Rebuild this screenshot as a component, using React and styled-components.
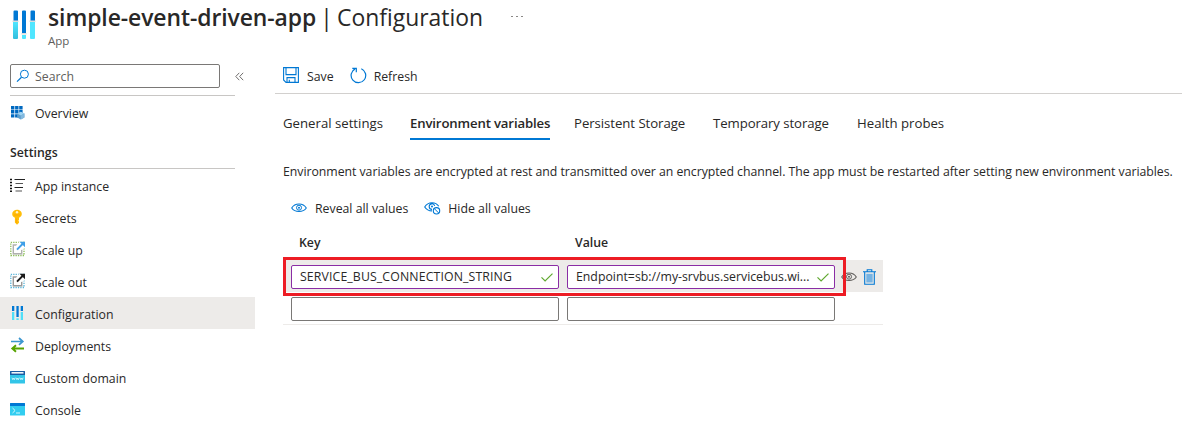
import React from 'react';
import styled, { createGlobalStyle } from 'styled-components';

const GlobalStyle = createGlobalStyle`
  * { box-sizing: border-box; }
  body {
    margin: 0;
    background: #fff;
    color: #292827;
    font-family: "Open Sans", "Noto Sans", sans-serif;
    font-size: 12.3px;
    line-height: 18px;
    overflow: hidden;
  }
`;

const Page = styled.div`
  width: 1182px;
  height: 426px;
  overflow: hidden;
`;

const Header = styled.header`
  display: flex;
  height: 64px;
  padding: 0 0 0 10px;
`;

const HeaderIcon = styled.div`
  width: 38px;
  padding-top: 9px;
`;

const Titles = styled.div`
  padding-top: 2px;
`;

const Title = styled.h1`
  display: flex;
  margin: 0;
  font-size: 22.9px;
  font-weight: 400;
  line-height: 32px;
  white-space: pre;
  word-spacing: -1.8px;
`;

const TitleName = styled.span`
  font-weight: 600;
  letter-spacing: -0.07px;
`;

const Subtitle = styled.div`
  margin-top: -1px;
  font-size: 11.5px;
  line-height: 16px;
  color: #605e5c;
`;

const More = styled.span`
  display: flex;
  gap: 3px;
  margin: 14px 0 0 28px;
  i {
    width: 2px;
    height: 1px;
    background: #8a8886;
  }
`;

const Body = styled.div`
  display: flex;
`;

const Sidebar = styled.nav`
  width: 255px;
  flex: none;
  margin-right: 20px;
`;

const SearchRow = styled.div`
  display: flex;
  align-items: center;
  padding-left: 10px;
`;

const SearchBox = styled.div`
  display: flex;
  align-items: center;
  width: 210px;
  height: 24px;
  padding: 1px 0 0 5px;
  gap: 5px;
  border: 1px solid #7a7876;
  border-radius: 2px;
  color: #605e5c;
  margin-right: 15px;
  svg { margin-top: -2px; }
`;

const Rule = styled.div`
  height: 1px;
  width: 225px;
  margin: ${(p) => p.$top}px 0 0 10px;
  background: #c8c6c4;
`;

const NavItem = styled.div`
  display: flex;
  align-items: center;
  height: 32px;
  padding: 0 0 0 10px;
  margin-top: ${(p) => p.$top || 0}px;
  background: ${(p) => (p.$active ? '#edebe9' : 'transparent')};
  svg { margin: ${(p) => p.$drop - 4}px 10px 0 0; }
  span { padding-top: ${(p) => p.$drop}px; }
`;

const SectionTitle = styled.div`
  margin: 15px 0 0 10px;
  height: 18px;
  font-weight: 600;
`;

const Main = styled.main`
  flex: 1;
  min-width: 0;
`;

const Toolbar = styled.div`
  display: flex;
  align-items: center;
  height: 30px;
  padding: 0 0 6px 8px;
  border-bottom: 1px solid #d2d0ce;
`;

const Command = styled.div`
  display: flex;
  align-items: center;
  gap: ${(p) => p.$gap}px;
  margin-right: ${(p) => p.$after || 0}px;
  svg { flex: none; margin-top: ${(p) => p.$lift || 0}px; }
  span { padding-top: ${(p) => p.$drop || 0}px; }
`;

const Tabs = styled.div`
  display: flex;
  padding: 18px 0 0 8px;
  height: 46px;
`;

const Tab = styled.div`
  width: ${(p) => p.$width}px;
  margin-right: ${(p) => p.$after}px;
  height: 28px;
  line-height: 22px;
  font-size: 13.2px;
  white-space: nowrap;
  font-weight: ${(p) => (p.$active ? 600 : 400)};
  border-bottom: 2px solid ${(p) => (p.$active ? '#0078d4' : 'transparent')};
  letter-spacing: ${(p) => p.$spacing || 0}px;
`;

const Description = styled.p`
  margin: 23px 0 0 8px;
  white-space: nowrap;
  letter-spacing: -0.04px;
`;

const ValueActions = styled.div`
  display: flex;
  height: 18px;
  margin-top: 19px;
  padding-left: 16px;
`;

const Table = styled.div`
  position: relative;
  width: 600px;
  margin: 15px 0 0 8px;
`;

const HeadRow = styled.div`
  display: grid;
  grid-template-columns: 276px 1fr;
  height: 27px;
  padding: 1px 0 0 16px;
  font-weight: 600;
`;

const Row = styled.div`
  display: flex;
  align-items: flex-start;
  gap: 8px;
  height: ${(p) => (p.$active ? 32 : 33)}px;
  padding: 5px 0 0 8px;
  background: ${(p) => (p.$active ? '#edebe9' : 'transparent')};
  border-bottom: 1px solid #edebe9;
`;

const Field = styled.div`
  display: flex;
  align-items: center;
  justify-content: space-between;
  width: 268px;
  height: 24px;
  padding: 0 5px 0 8px;
  background: #fff;
  border: 1px solid ${(p) => (p.$valid ? '#8a2da5' : '#7a7876')};
  border-radius: 2px;
  white-space: nowrap;
  letter-spacing: ${(p) => p.$spacing || 0}px;
`;

const RowActions = styled.div`
  display: flex;
  align-items: center;
  height: 24px;
  gap: 6px;
  margin-left: -2px;
`;

const Highlight = styled.div`
  position: absolute;
  left: 0;
  top: 24px;
  width: 563px;
  height: 39px;
  border: 3px solid #ed1c24;
`;

const Svg = ({ w = 16, h = 16, children }) => (
  <svg width={w} height={h} viewBox={`0 0 ${w} ${h}`} fill="none">{children}</svg>
);

const AppIcon = () => (
  <Svg w={28} h={32}>
    <defs>
      <linearGradient id="cyan" x1="0" y1="0" x2="0" y2="1">
        <stop offset="0" stopColor="#50e6ff" />
        <stop offset="1" stopColor="#32bedd" />
      </linearGradient>
    </defs>
    <path d="M3.500 2.500q0-1 1-1h2.500q1 0 1 1V12H3.500zM20.500 2.500q0-1 1-1h2.500q1 0 1 1V12h-4.500zM12 2.500q0-1 1-1h2q1 0 1 1V24h-4z" fill="#0078d4" />
    <path d="M3 13h5v16q0 1-1 1H4q-1 0-1-1z" fill="url(#cyan)" />
    <path d="M20 13h5v16q0 1-1 1h-3q-1 0-1-1zM12 26h4v3q0 1-1 1h-2q-1 0-1-1z" fill="#50e6ff" />
    <path d="M2.500 12.200h6M19.500 12.200h6M11.500 24.800h5" stroke="#dcdcdc" strokeWidth="1.600" />
  </Svg>
);

const SearchIcon = () => (
  <Svg w={14} h={14}>
    <circle cx="8.400" cy="5.200" r="4" stroke="#0078d4" />
    <path d="M5.500 8.200 1 12.600" stroke="#0078d4" strokeWidth="1.200" />
  </Svg>
);

const CollapseIcon = () => (
  <Svg w={9} h={9}>
    <path d="M4.300.8.8 4.500l3.500 3.700M8.200.8 4.700 4.500l3.500 3.700" stroke="#605e5c" strokeWidth=".9" />
  </Svg>
);

const OverviewIcon = () => (
  <Svg w={15} h={16}>
    <path d="M1 2h3.400v3.400H1zM5.100 2h3.400v3.400H5.100zM9.200 2h3.400v3.400H9.200zM1 6.100h3.400v3.400H1zM5.100 6.100h3.400v3.400H5.100zM9.200 6.100h3.400v3.400H9.200zM1 10.200h3.400v3.400H1zM5.100 10.200h3.400v3.400H5.100z" fill="#0069c0" />
    <path d="m10.800 7.800 3.600 1.800v4l-3.600 1.900-3.600-1.900v-4z" fill="#5ea0cf" />
    <path d="m10.800 7.800 3.600 1.800-3.600 1.900-3.600-1.900z" fill="#9fd4f3" />
    <path d="m10.800 11.500 3.600-1.900v4l-3.600 1.900z" fill="#83b9df" />
  </Svg>
);

const ListIcon = () => (
  <Svg w={15} h={16}>
    <path d="M0 2.500h2M0 5.500h2M0 8.500h2M0 11.500h2M0 14.300h2" stroke="#111" strokeWidth="1.500" />
    <path d="M4.500 2.500H15M4.500 10.500H13" stroke="#222" strokeWidth="1.200" />
    <path d="M5.500 6.500h7.500M5.500 14h6.500" stroke="#555" strokeWidth="1.200" />
  </Svg>
);

const KeyIcon = () => (
  <Svg w={15} h={16}>
    <path d="M7 .8C4.300.8 2.200 2.700 2.200 5c0 1.700 1 3 2.700 3.800v4.700L7 15.700l2-2v-1.100l-.7-.8.7-.8V8.800c1.700-.8 2.800-2.100 2.800-3.800C11.800 2.700 9.700.8 7 .8z" fill="#ffbe0a" />
    <circle cx="7" cy="3.200" r="1.200" fill="#fff3d0" />
    <path d="M4 6h6M6.300 9.500v4.500" stroke="#ffa800" strokeWidth="1" />
  </Svg>
);

const ScaleIcon = ({ dots, arrow, box }) => (
  <Svg w={15} h={16}>
    <rect x=".8" y="1.300" width="13.200" height="13.200" stroke={dots} strokeWidth="1.300" strokeDasharray="1.300 1.100" />
    <path d="M7.500 4H3.300v8.700h8.400V8.500" stroke={box} strokeWidth="1.400" />
    <path d="M5.500 9V5.500L9 1h6v6l-4 2z" fill="#fff" />
    <path d="M7 8.700 13 2.500" stroke={arrow} strokeWidth="1.900" />
    <path d="M9.500.8H15v5.500z" fill={arrow} />
  </Svg>
);

const ConfigIcon = () => (
  <Svg w={15} h={16}>
    <path d="M2 1h2.300v5H2zM6.400 1h2.300v11H6.400zM10.700 1H13v5h-2.300z" fill="#0078d4" />
    <path d="M2 7h2.300v8H2zM6.400 13.200h2.300V15H6.400zM10.700 7H13v8h-2.300z" fill="#50dff8" />
  </Svg>
);

const DeployIcon = () => (
  <Svg w={15} h={16}>
    <path d="M1 4.500h11.500M9 1 12.800 4.500 9 7.800" stroke="#3c97d0" strokeWidth="1.700" />
    <path d="M14 11.500H2.500M6 8.200 2.300 11.500 6 14.800" stroke="#57a300" strokeWidth="1.900" />
  </Svg>
);

const DomainIcon = () => (
  <Svg w={15} h={16}>
    <rect y="2" width="15" height="12.500" rx=".6" fill="#32c5e8" />
    <rect y="2" width="15" height="4" rx=".6" fill="#1a5ba3" />
    <rect x="1.500" y="3" width="12" height="1.600" fill="#f0f5fa" />
    <path d="m2 8.700.8 2 .8-1.700.8 1.700.8-2M6.100 8.700l.8 2 .7-1.700.8 1.700.8-2M10 8.700l.8 2 .8-1.700.7 1.700.8-2" stroke="#d8fbff" strokeWidth=".8" />
  </Svg>
);

const ConsoleIcon = () => (
  <Svg w={15} h={16}>
    <rect y="2" width="15" height="12.500" rx=".6" fill="#32cdf0" />
    <rect y="2" width="15" height="3" rx=".6" fill="#0078d4" />
    <path d="m2.500 7 2.600 2.500-2.600 2.500M6 12h4" stroke="#d4f8ff" strokeWidth="1" />
  </Svg>
);

const SaveIcon = () => (
  <Svg>
    <path d="M.6.6h14.800v14.800H3L.6 13zM3 .6v7h10v-7M4 15.400V10.600h8v4.800M6.300 15v-2.200" stroke="#0078d4" strokeWidth="1.100" />
  </Svg>
);

const RefreshIcon = () => (
  <Svg w={17} h={17}>
    <path d="M11.300 1.700a7.300 7.300 0 1 1-6.200.2" stroke="#0078d4" strokeWidth="1.200" />
    <path d="M2.300 1.300h4v4" stroke="#0078d4" strokeWidth="1.200" />
  </Svg>
);

const EyeIcon = ({ color = '#0078d4' }) => (
  <Svg w={16} h={12}>
    <path d="M.7 6C2.300 3.300 4.900 2 8 2S13.700 3.300 15.300 6C13.700 8.300 11.100 9.500 8 9.500S2.300 8.300.7 6z" stroke={color} strokeWidth="1.100" />
    <circle cx="8" cy="5.700" r="2.500" stroke={color} strokeWidth="1" />
    <circle cx="8" cy="5.700" r="1" fill={color} />
  </Svg>
);

const HideIcon = () => (
  <Svg w={17} h={14}>
    <path d="M8 9.900C4.900 9.900 2.300 8.600.7 6 2.300 3.300 4.900 1.700 8 1.700c2.900 0 5.300 1.300 6.800 3.600M8 8.400a2.800 2.800 0 1 1 2.700-3.500" stroke="#0078d4" strokeWidth="1.100" />
    <circle cx="8" cy="5.600" r="1" fill="#0078d4" />
    <circle cx="12.500" cy="9.800" r="3.200" fill="#fff" stroke="#0078d4" strokeWidth="1.100" />
    <path d="m10.300 7.600 4.400 4.400" stroke="#0078d4" />
  </Svg>
);

const CheckIcon = () => (
  <Svg w={12} h={9}>
    <path d="m.5 4.300 3.600 3.600L11.500.6" stroke="#5fa82f" strokeWidth="1.200" />
  </Svg>
);

const TrashIcon = () => (
  <Svg w={13} h={16}>
    <path d="M0 2.700h13M4.200 2.500V.7h4.600v1.800M1.700 3v12.300h9.600V3" stroke="#0078d4" strokeWidth="1.100" />
    <path d="M3.300 4.800h6.400v8.700H3.300z" fill="#76b3e3" />
  </Svg>
);

const settings = [
  { label: 'App instance', icon: <ListIcon /> },
  { label: 'Secrets', icon: <KeyIcon /> },
  { label: 'Scale up', icon: <ScaleIcon dots="#8cbd5a" arrow="#3f9fe8" box="#b0b0b0" /> },
  { label: 'Scale out', icon: <ScaleIcon dots="#59b4d9" arrow="#1b1b1b" box="#999" /> },
  { label: 'Configuration', icon: <ConfigIcon />, active: true },
  { label: 'Deployments', icon: <DeployIcon /> },
  { label: 'Custom domain', icon: <DomainIcon /> },
  { label: 'Console', icon: <ConsoleIcon /> },
];

const tabs = [
  { label: 'General settings', width: 100, after: 27 },
  { label: 'Environment variables', width: 140, after: 24, active: true, spacing: -0.15 },
  { label: 'Persistent Storage', width: 111, after: 28, spacing: -0.05 },
  { label: 'Temporary storage', width: 116, after: 28, spacing: -0.08 },
  { label: 'Health probes', width: 87, after: 0 },
];

export default function App() {
  return (
    <Page>
      <GlobalStyle />
      <Header>
        <HeaderIcon><AppIcon /></HeaderIcon>
        <Titles>
          <Title>
            <TitleName>simple-event-driven-app</TitleName> | Configuration
            <More><i /><i /><i /></More>
          </Title>
          <Subtitle>App</Subtitle>
        </Titles>
      </Header>
      <Body>
        <Sidebar>
          <SearchRow>
            <SearchBox><SearchIcon />Search</SearchBox>
            <CollapseIcon />
          </SearchRow>
          <Rule $top={7} />
          <NavItem $top={1} $drop={2}><OverviewIcon /><span>Overview</span></NavItem>
          <SectionTitle>Settings</SectionTitle>
          <Rule $top={6} />
          {settings.map((s) => (
            <NavItem key={s.label} $active={s.active} $drop={4}>{s.icon}<span>{s.label}</span></NavItem>
          ))}
        </Sidebar>
        <Main>
          <Toolbar>
            <Command $gap={8} $after={16} $lift={-1} $drop={2}><SaveIcon /><span>Save</span></Command>
            <Command $gap={7} $lift={-1} $drop={2}><RefreshIcon /><span>Refresh</span></Command>
          </Toolbar>
          <Tabs>
            {tabs.map((t) => (
              <Tab key={t.label} $width={t.width} $after={t.after} $active={t.active} $spacing={t.spacing}>{t.label}</Tab>
            ))}
          </Tabs>
          <Description>
            Environment variables are encrypted at rest and transmitted over an encrypted channel. The app must be restarted after setting new environment variables.
          </Description>
          <ValueActions>
            <Command $gap={8} $after={16} $lift={-2}><EyeIcon /><span>Reveal all values</span></Command>
            <Command $gap={7} $lift={-3}><HideIcon /><span>Hide all values</span></Command>
          </ValueActions>
          <Table>
            <HeadRow><span>Key</span><span>Value</span></HeadRow>
            <Row $active>
              <Field $valid $spacing={0.12}><span>SERVICE_BUS_CONNECTION_STRING</span><CheckIcon /></Field>
              <Field $valid><span>Endpoint=sb://my-srvbus.servicebus.wi...</span><CheckIcon /></Field>
              <RowActions><EyeIcon color="#605e5c" /><TrashIcon /></RowActions>
            </Row>
            <Row><Field /><Field /></Row>
            <Highlight />
          </Table>
        </Main>
      </Body>
    </Page>
  );
}
